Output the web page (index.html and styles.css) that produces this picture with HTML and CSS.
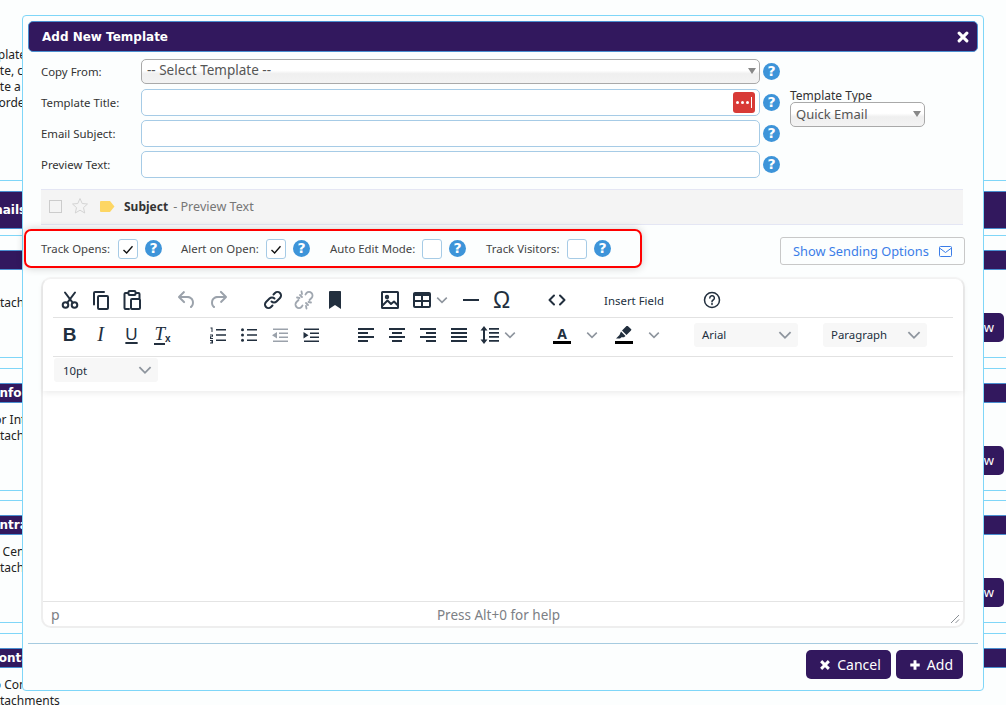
FILE: index.html
```html
<!DOCTYPE html>
<html>
<head>
    <link rel="stylesheet" href="styles.css">
</head>
<body>
    <!-- page behind the dialog -->
    <div class="page">
        <div class="intro">
            <div class="intro-line">Templates let you save a message</div>
            <div class="intro-line">Create, copy or edit one here</div>
            <div class="intro-line">Create a new one for each email</div>
            <div class="intro-line">Use order to sort the list</div>
        </div>
        <div class="banner"><div class="banner-bar"><span class="head-emails">Emails</span></div></div>
        <div class="section">
            <div class="section-bar"></div>
            <div class="section-text"><div>&nbsp;</div><div>Attachments</div></div>
            <a class="view-btn">View</a>
        </div>
        <div class="section">
            <div class="section-bar"><span class="head-info">Info</span></div>
            <div class="section-text"><div>For Internal</div><div>Attachments</div></div>
            <a class="view-btn">View</a>
        </div>
        <div class="section">
            <div class="section-bar"><span class="head-info">Intra</span></div>
            <div class="section-text"><div>In Center</div><div>Attachments</div></div>
            <a class="view-btn">View</a>
        </div>
        <div class="section">
            <div class="section-bar"><span class="head-cont">Contacts</span></div>
            <div class="section-text"><div>To Contacts</div><div>Attachments</div></div>
        </div>
    </div>

    <div class="modal">
        <div class="modal-title">
            <span>Add New Template</span>
            <svg class="close-x" viewBox="0 0 14 14"><path d="M2.5 2.5l9 9M11.5 2.5l-9 9"/></svg>
        </div>

        <div class="form-area">
            <div class="form-rows">
                <div class="form-row row-select">
                    <label>Copy From:</label>
                    <div class="select-wrap"><select class="select-box"><option>-- Select Template --</option></select></div>
                    <span class="help">?</span>
                </div>
                <div class="form-row">
                    <label>Template Title:</label>
                    <div class="input-wrap">
                        <input class="text-input" type="text">
                        <span class="lp-btn"><i></i><i></i><i></i><b></b></span>
                    </div>
                    <span class="help">?</span>
                </div>
                <div class="form-row">
                    <label>Email Subject:</label>
                    <div class="input-wrap"><input class="text-input" type="text"></div>
                    <span class="help">?</span>
                </div>
                <div class="form-row">
                    <label>Preview Text:</label>
                    <div class="input-wrap"><input class="text-input" type="text"></div>
                    <span class="help">?</span>
                </div>
            </div>
            <div class="type-col">
                <div class="type-label">Template Type</div>
                <div class="select-wrap"><select class="select-box"><option>Quick Email</option></select></div>
            </div>
        </div>

        <div class="preview-strip">
            <span class="mini-check"></span>
            <svg class="star" width="18" height="18" viewBox="0 0 18 18"><path d="M9 1.5l2.2 5 5.3.5-4 3.6 1.2 5.4L9 13.2 4.3 16l1.2-5.4-4-3.6 5.3-.5z"/></svg>
            <svg class="tag" width="15" height="11" viewBox="0 0 15 11"><path d="M1 0h9l4.5 5.5L10 11H1a1 1 0 0 1-1-1V1a1 1 0 0 1 1-1z"/></svg>
            <span class="strip-subject">Subject</span>
            <span class="strip-preview">- Preview Text</span>
        </div>

        <div class="options-row">
            <div class="track-box">
                <span class="track-label">Track Opens:</span>
                <span class="check-box"><svg viewBox="0 0 20 20"><path d="M5 11l3.5 3.5L15 7"/></svg></span>
                <span class="help">?</span>
                <span class="track-label alert-label">Alert on Open:</span>
                <span class="check-box"><svg viewBox="0 0 20 20"><path d="M5 11l3.5 3.5L15 7"/></svg></span>
                <span class="help">?</span>
                <span class="track-label auto-label">Auto Edit Mode:</span>
                <span class="check-box"></span>
                <span class="help">?</span>
                <span class="track-label visit-label">Track Visitors:</span>
                <span class="check-box"></span>
                <span class="help">?</span>
            </div>
            <a class="sending-btn">Show Sending Options
                <svg width="13" height="11" viewBox="0 0 13 11"><rect x=".5" y=".5" width="12" height="10" rx="1"/><path d="M.5 2l6 4.5 6-4.5"/></svg>
            </a>
        </div>

        <div class="editor">
            <div class="editor-head">
                <div class="tb-row tb-row-one">
                    <div class="tb-group">
                        <span class="tb"><svg viewBox="0 0 24 24" class="ic"><circle cx="7.5" cy="17" r="2.8"/><circle cx="16.5" cy="17" r="2.8"/><path d="M9.2 14.8L17 4.5M14.8 14.8L7 4.5"/></svg></span>
                        <span class="tb"><svg viewBox="0 0 24 24" class="ic"><path d="M5 16.5V5a1 1 0 0 1 1-1h9"/><rect x="9" y="8" width="10" height="13" rx="1"/></svg></span>
                        <span class="tb"><svg viewBox="0 0 24 24" class="ic"><path d="M8 5H5.5a1 1 0 0 0-1 1v14a1 1 0 0 0 1 1H9M16 5h2.5a1 1 0 0 1 1 1v4"/><rect x="8.5" y="3" width="7" height="4" rx="1"/><rect x="11" y="11" width="9" height="10" rx="1"/></svg></span>
                    </div>
                    <div class="tb-group">
                        <span class="tb"><svg viewBox="0 0 24 24" class="ic-fill off"><path d="M6.4 8H12c3.7 0 6.2 2 6.8 5.1.6 2.7-.4 5.6-2.3 6.8a1 1 0 0 1-1-1.8c1.1-.7 1.8-2.7 1.4-4.6-.5-2.1-2.1-3.5-4.9-3.5H6.4l3.3 3.3a1 1 0 1 1-1.4 1.4l-5-5a1 1 0 0 1 0-1.4l5-5a1 1 0 0 1 1.4 1.4L6.4 8z"/></svg></span>
                        <span class="tb"><svg viewBox="0 0 24 24" class="ic-fill off"><path d="M17.6 10H12c-2.8 0-4.4 1.4-4.9 3.5-.4 2 .3 4 1.4 4.6a1 1 0 1 1-1 1.8c-2-1.2-2.9-4.1-2.3-6.8.6-3 3-5.1 6.8-5.1h5.6l-3.3-3.3a1 1 0 1 1 1.4-1.4l5 5a1 1 0 0 1 0 1.4l-5 5a1 1 0 0 1-1.4-1.4l3.3-3.3z"/></svg></span>
                    </div>
                    <div class="tb-group">
                        <span class="tb"><svg viewBox="0 0 24 24" class="ic"><path d="M10.5 13.5a3.5 3.5 0 0 0 5 0l3.5-3.5a3.5 3.5 0 0 0-5-5l-1.5 1.5"/><path d="M13.5 10.5a3.5 3.5 0 0 0-5 0L5 14a3.5 3.5 0 0 0 5 5l1.5-1.5"/></svg></span>
                        <span class="tb"><svg viewBox="0 0 24 24" class="ic off"><path d="M13.5 6.5L14.5 5a3.5 3.5 0 0 1 5 5L17.5 12"/><path d="M10.5 17.5L9.5 19a3.5 3.5 0 0 1-5-5L6.5 12"/><path d="M10 9L8 7M7.5 10L5 9.5M10 6L9.5 3.5M14 15l2 2M16.5 14l2.5.5M14 18l.5 2.5"/></svg></span>
                        <span class="tb"><svg viewBox="0 0 24 24" class="ic-fill"><path d="M6 4v17l6-4 6 4V4c0-.6-.4-1-1-1H7a1 1 0 0 0-1 1z"/></svg></span>
                    </div>
                    <div class="tb-group">
                        <span class="tb"><svg viewBox="0 0 24 24" class="ic"><rect x="4" y="4" width="16" height="16" rx=".5"/><path d="M4.5 17.5l5-5 3.5 3.5 3-2.5 4 4"/><circle cx="9" cy="9" r="1.2"/></svg></span>
                        <span class="tb tb-split"><svg viewBox="0 0 24 24" class="ic-fill"><path d="M19 4a2 2 0 0 1 2 2v12a2 2 0 0 1-2 2H5a2 2 0 0 1-2-2V6c0-1.1.9-2 2-2h14zM5 14v4h6v-4H5zm14 0h-6v4h6v-4zm0-6h-6v4h6V8zM5 12h6V8H5v4z"/></svg><svg viewBox="0 0 10 10" class="chev"><path d="M1 3l4 4 4-4"/></svg></span>
                        <span class="tb"><svg viewBox="0 0 24 24" class="ic-fill"><path d="M4 11h16v2H4z"/></svg></span>
                        <span class="tb tb-text omega">Ω</span>
                    </div>
                    <div class="tb-group">
                        <span class="tb"><svg viewBox="0 0 24 24" class="ic"><path d="M9 7.5L4.5 12 9 16.5M15 7.5l4.5 4.5-4.5 4.5"/></svg></span>
                    </div>
                    <div class="tb-group">
                        <span class="tb-field">Insert Field</span>
                    </div>
                    <div class="tb-group">
                        <span class="tb"><svg viewBox="0 0 24 24" class="ic thin"><circle cx="12" cy="12" r="7.5"/><path d="M9.8 10a2.3 2.3 0 1 1 3.4 2c-.8.5-1.2 1-1.2 1.8"/><path d="M12 15.5v1"/></svg></span>
                    </div>
                </div>

                <div class="tb-row tb-row-two">
                    <div class="tb-group">
                        <span class="tb tb-text fmt-b">B</span>
                        <span class="tb tb-text fmt-i">I</span>
                        <span class="tb tb-text fmt-u">U</span>
                        <span class="tb tb-text fmt-t"><span class="t-mark">T</span><span class="t-x">x</span></span>
                    </div>
                    <div class="tb-group">
                        <span class="tb"><svg viewBox="0 0 24 24" class="ic-fill"><path d="M10 6h10v1.6H10zM10 11.2h10v1.6H10zM10 16.4h10v1.6H10zM4.500 4.500h2V9h-1V5.500h-1zM4 11.500h3v2.300H5.200V15H7v1H4v-2.700h2v-.8H4zM4 17h3v3.500H4v-1h2V19.200H5v-.8h1v-.4H4z"/></svg></span>
                        <span class="tb"><svg viewBox="0 0 24 24" class="ic-fill"><path d="M10 6h10v1.6H10zM10 11.2h10v1.6H10zM10 16.4h10v1.6H10z"/><circle cx="5.5" cy="6.8" r="1.5"/><circle cx="5.5" cy="12" r="1.5"/><circle cx="5.5" cy="17.2" r="1.5"/></svg></span>
                        <span class="tb"><svg viewBox="0 0 24 24" class="ic-fill off"><path d="M5 5.5h15v1.6H5zM11 9.5h9v1.6h-9zM11 13.5h9v1.6h-9zM5 17.5h15v1.6H5zM9 9v6.500L4 12.300z"/></svg></span>
                        <span class="tb"><svg viewBox="0 0 24 24" class="ic-fill"><path d="M5 5.5h15v1.6H5zM11 9.5h9v1.6h-9zM11 13.5h9v1.6h-9zM5 17.5h15v1.6H5zM4.500 9v6.500l5-3.200z"/></svg></span>
                    </div>
                    <div class="tb-group">
                        <span class="tb"><svg viewBox="0 0 24 24" class="ic-fill"><path d="M4 5h16v2H4zM4 9h10v2H4zM4 13h16v2H4zM4 17h10v2H4z"/></svg></span>
                        <span class="tb"><svg viewBox="0 0 24 24" class="ic-fill"><path d="M4 5h16v2H4zM7 9h10v2H7zM4 13h16v2H4zM7 17h10v2H7z"/></svg></span>
                        <span class="tb"><svg viewBox="0 0 24 24" class="ic-fill"><path d="M4 5h16v2H4zM10 9h10v2H10zM4 13h16v2H4zM10 17h10v2H10z"/></svg></span>
                        <span class="tb"><svg viewBox="0 0 24 24" class="ic-fill"><path d="M4 5h16v2H4zM4 9h16v2H4zM4 13h16v2H4zM4 17h16v2H4z"/></svg></span>
                        <span class="tb tb-split tb-line"><svg viewBox="0 0 24 24" class="ic-fill"><path d="M11 5h10v1.8H11zM11 9h10v1.8H11zM11 13h10v1.8H11zM11 17h10v1.8H11zM6 3l3.500 4.500H7V16.500h2.500L6 21l-3.500-4.500H5V7.500H2.500z"/></svg><svg viewBox="0 0 10 10" class="chev"><path d="M1 3l4 4 4-4"/></svg></span>
                    </div>
                    <div class="tb-group tb-colors">
                        <span class="tb-color"><span class="color-a">A<b></b></span><svg viewBox="0 0 10 10" class="chev"><path d="M1 3l4 4 4-4"/></svg></span>
                        <span class="tb-color"><span class="color-pen"><svg viewBox="0 0 18 14" width="18" height="14"><path d="M7 4.5L11.5 0a1 1 0 0 1 1.3 0l3.2 3a1 1 0 0 1 0 1.4L11.5 9zM6 5.5l4.5 4.5-1.5 1.2H6.5L5 12.5H1L4.5 9z"/></svg><b></b></span><svg viewBox="0 0 10 10" class="chev"><path d="M1 3l4 4 4-4"/></svg></span>
                    </div>
                    <span class="tb-select first-select">Arial<svg viewBox="0 0 10 10" class="chev"><path d="M1 3l4 4 4-4"/></svg></span>
                    <span class="tb-select second-select">Paragraph<svg viewBox="0 0 10 10" class="chev"><path d="M1 3l4 4 4-4"/></svg></span>
                </div>

                <div class="tb-row tb-row-three">
                    <span class="tb-select">10pt<svg viewBox="0 0 10 10" class="chev"><path d="M1 3l4 4 4-4"/></svg></span>
                </div>
            </div>
            <div class="editor-area"></div>
            <div class="editor-status">
                <span class="status-path">p</span>
                <span class="status-help">Press Alt+0 for help</span>
                <svg class="resize" width="10" height="10" viewBox="0 0 10 10"><path d="M1 9l8-8M5.5 9L9 5.5"/></svg>
            </div>
        </div>

        <div class="modal-footer">
            <a class="btn"><svg viewBox="0 0 14 14" width="12" height="12" class="btn-x"><path d="M2.5 2.5l9 9M11.5 2.5l-9 9"/></svg>Cancel</a>
            <a class="btn"><svg viewBox="0 0 14 14" width="12" height="12" class="btn-x"><path d="M7 1.5v11M1.5 7h11"/></svg>Add</a>
        </div>
    </div>
</body>
</html>
```

FILE: styles.css
```css
html {
    overflow: hidden;
}

body {
    margin: 0;
    height: 705px;
    overflow: hidden;
    background-color: #fcfefe;
    font-family: "Noto Sans", Arial, sans-serif;
    font-size: 11.4px;
    color: #333;
    position: relative;
}

/* page behind the dialog */
.page {
    height: 658px;
    overflow: hidden;
    padding-top: 47px;
}

.intro {
    height: 133px;
    font-size: 12px;
    line-height: 16px;
    color: #222;
    margin-left: -26px;
    white-space: nowrap;
}

.banner {
    border-top: 1px solid #7fd6f8;
    padding-top: 10px;
    margin-bottom: 6px;
}

.banner-bar {
    height: 36px;
    line-height: 36px;
    background-color: #32185e;
    border-top: 1px solid #4a8fd0;
    border-bottom: 1px solid #4a8fd0;
    color: white;
    font-family: "DejaVu Sans", sans-serif;
    font-weight: bold;
    font-size: 12px;
}

.head-emails {
    margin-left: -18px;
}

.section {
    height: 107px;
    border-top: 1px solid #7fd6f8;
    border-bottom: 1px solid #7fd6f8;
    margin-bottom: 9.6px;
    padding-top: 14px;
}

.section-bar {
    height: 18px;
    line-height: 18px;
    background-color: #32185e;
    border-top: 1px solid #4a8fd0;
    border-bottom: 1px solid #4a8fd0;
    color: white;
    font-family: "DejaVu Sans", sans-serif;
    font-weight: bold;
    font-size: 12px;
}

.head-info {
    margin-left: -5px;
}

.head-cont {
    margin-left: -10px;
}

.section-text {
    margin: 9px 0 0 -12px;
    font-size: 12px;
    line-height: 16px;
    color: #222;
    white-space: nowrap;
}

.view-btn {
    display: block;
    width: 60px;
    height: 29px;
    line-height: 29px;
    margin: 2px 2px 0 auto;
    padding-right: 10px;
    box-sizing: border-box;
    text-align: right;
    background-color: #32185e;
    color: white;
    border-radius: 5px;
    font-size: 13px;
}

/* dialog */
.modal {
    position: absolute;
    left: 22px;
    top: 15px;
    width: 962px;
    height: 676px;
    box-sizing: border-box;
    background-color: #fcfefe;
    border: 1px solid #7fd6f8;
    border-radius: 4px;
    padding: 5px;
}

.modal-title {
    display: flex;
    justify-content: space-between;
    align-items: center;
    height: 31px;
    box-sizing: border-box;
    padding: 0 8px 0 13px;
    background-color: #32185e;
    border: 1px solid #4a8fd0;
    border-radius: 5px;
    color: white;
    font-family: "DejaVu Sans", sans-serif;
    font-weight: bold;
    font-size: 12px;
}

.close-x {
    width: 12px;
    height: 12px;
    fill: none;
    stroke: white;
    stroke-width: 3.6;
    stroke-linecap: round;
}

.form-area {
    display: flex;
    padding: 7px 0 0 13px;
}

.form-rows {
    display: flex;
    flex-direction: column;
    gap: 4px;
    width: 749px;
}

.form-row {
    display: flex;
    align-items: center;
    height: 27px;
}

.form-row label {
    width: 100px;
    flex-shrink: 0;
}

.row-select {
    height: 25px;
    margin-bottom: 1px;
}

.select-wrap {
    position: relative;
    height: 100%;
}

.form-row .select-wrap,
.input-wrap {
    width: 619px;
    height: 100%;
    position: relative;
}

.select-box {
    appearance: none;
    width: 100%;
    height: 100%;
    box-sizing: border-box;
    padding: 0 0 3px 5px;
    border: 1px solid #a9a9a9;
    border-radius: 5px;
    background: linear-gradient(#fff 45%, #efefef 60%, #f3f3f3);
    font-family: "Noto Sans", Arial, sans-serif;
    font-size: 13.5px;
    color: #555;
}

.select-wrap::after {
    content: "";
    position: absolute;
    right: 4px;
    top: 9px;
    border-left: 4px solid transparent;
    border-right: 4px solid transparent;
    border-top: 6px solid #888;
}

.text-input {
    width: 100%;
    height: 100%;
    box-sizing: border-box;
    border: 1px solid #a6cbe6;
    border-radius: 5px;
    background-color: white;
}

.lp-btn {
    position: absolute;
    right: 5px;
    top: 3px;
    width: 22px;
    height: 21px;
    background-color: #d83a36;
    border-radius: 3px;
    display: flex;
    align-items: center;
    justify-content: center;
    gap: 2px;
}

.lp-btn i {
    width: 3px;
    height: 3px;
    border-radius: 50%;
    background-color: white;
}

.lp-btn b {
    width: 1px;
    height: 11px;
    background-color: white;
}

.help {
    display: inline-block;
    flex-shrink: 0;
    width: 17px;
    height: 17px;
    line-height: 17px;
    margin-left: 3px;
    border-radius: 50%;
    background-color: #3d94d9;
    color: white;
    text-align: center;
    font-family: "DejaVu Sans", sans-serif;
    font-weight: bold;
    font-size: 14px;
}

.type-col {
    margin-top: 30px;
    width: 135px;
}

.type-label {
    line-height: 13px;
    font-size: 12px;
    color: #333;
    white-space: nowrap;
}

.type-col .select-wrap {
    height: 25px;
}

.type-col .select-box {
    font-size: 13px;
    padding-bottom: 2px;
}

.preview-strip {
    display: flex;
    align-items: center;
    height: 36px;
    box-sizing: border-box;
    margin: 11px 15px 0 13px;
    padding: 0 0 2px 8px;
    background-color: #f4f4f4;
    border-top: 1px solid #e4e6f4;
    border-bottom: 1px solid #e4e6f4;
}

.mini-check {
    width: 13px;
    height: 13px;
    border: 1px solid #ccc;
    box-sizing: border-box;
}

.star {
    margin-left: 9px;
    fill: none;
    stroke: #d4d4d4;
    stroke-width: 1;
}

.tag {
    margin-left: 11px;
    fill: #fdd663;
}

.strip-subject {
    margin-left: 9px;
    font-size: 12px;
    font-weight: bold;
    color: #333;
}

.strip-preview {
    margin-left: 5px;
    font-size: 12.6px;
    color: #777;
}

.options-row {
    display: flex;
    justify-content: space-between;
    height: 39px;
    margin: 4px 13px 0 -4px;
}

.track-box {
    display: flex;
    align-items: center;
    width: 618px;
    height: 39px;
    box-sizing: border-box;
    padding-left: 15px;
    border: 2px solid #f00;
    border-radius: 7px;
    box-shadow: 0 0 8px rgba(0, 0, 0, 0.2);
    white-space: nowrap;
}

.track-label {
    width: 77px;
    color: #444;
}

.alert-label {
    width: 85px;
    margin-left: 19px;
}

.auto-label {
    width: 92px;
    margin-left: 20px;
}

.visit-label {
    width: 81px;
    margin-left: 20px;
}

.check-box {
    width: 20px;
    height: 20px;
    box-sizing: border-box;
    border: 1px solid #a6cbe6;
    border-radius: 3px;
    background-color: white;
}

.check-box svg {
    display: block;
    width: 18px;
    height: 18px;
    fill: none;
    stroke: #111;
    stroke-width: 1.5;
}

.check-box + .help {
    margin-left: 7px;
}

.sending-btn {
    display: flex;
    align-items: center;
    justify-content: space-between;
    align-self: flex-start;
    width: 185px;
    height: 28px;
    box-sizing: border-box;
    margin-top: 8px;
    padding: 0 12px;
    border: 1px solid #c8c8c8;
    border-radius: 3px;
    color: #3b7de8;
    font-size: 12.8px;
    white-space: nowrap;
}

.sending-btn svg {
    fill: none;
    stroke: #3b7de8;
}

/* editor */
.editor {
    display: flex;
    flex-direction: column;
    height: 351px;
    box-sizing: border-box;
    margin: 9px 13px 0 13px;
    border: 2px solid #eeeeee;
    border-top-color: #f6f6f6;
    border-radius: 10px;
    background-color: white;
}

.editor-head {
    padding: 5px 10px 0 10px;
    height: 112px;
    box-sizing: border-box;
    box-shadow: 0 2px 6px rgba(0, 0, 0, 0.08);
    border-radius: 8px 8px 0 0;
}

.tb-row {
    display: flex;
    align-items: center;
    gap: 24px;
    border-bottom: 1px solid #e2e2e2;
}

.tb-row-one {
    height: 32px;
    padding: 0 0 1px 1px;
}

.tb-row-two {
    height: 33px;
    padding: 0 0 5px 1px;
}

.tb-row-three {
    height: 32px;
    padding: 1px 0 0 1px;
    align-items: flex-start;
    border-bottom: none;
}

.tb-row-three .tb-select {
    padding-left: 9px;
}

.tb-group {
    display: flex;
    align-items: center;
    color: #222f3e;
}

.tb {
    display: flex;
    align-items: center;
    justify-content: center;
    width: 31px;
    height: 24px;
}

.tb svg.ic,
.tb svg.ic-fill {
    width: 24px;
    height: 24px;
    flex-shrink: 0;
}

.ic {
    fill: none;
    stroke: #222f3e;
    stroke-width: 2;
    stroke-linecap: round;
    stroke-linejoin: round;
}

.ic.thin {
    stroke-width: 1.5;
}

.ic.off {
    stroke: #a0a7b0;
    stroke-width: 1.8;
}

.ic-fill {
    fill: #222f3e;
}

.ic-fill.off {
    fill: #9ba2ab;
}

.tb-split {
    width: 50px;
    justify-content: flex-start;
    padding-left: 5px;
    box-sizing: border-box;
}

.tb-line {
    padding-left: 4px;
}

.chev {
    width: 12px;
    height: 12px;
    margin-left: 2px;
    flex-shrink: 0;
    fill: none;
    stroke: #8e959e;
    stroke-width: 1.3;
}

.tb-text {
    font-family: "Liberation Sans", Arial, sans-serif;
    color: #222f3e;
}

.omega {
    font-size: 23px;
}

.fmt-b {
    font-size: 19px;
    font-weight: bold;
}

.fmt-i {
    font-family: "Liberation Serif", serif;
    font-size: 20px;
    font-style: italic;
}

.fmt-u {
    font-size: 17px;
    text-decoration: underline;
    text-decoration-thickness: 2px;
    text-underline-offset: 2px;
}

.t-mark {
    font-family: "Liberation Serif", serif;
    font-style: italic;
    font-size: 19px;
    border-bottom: 2px solid #222f3e;
    line-height: 19px;
}

.t-x {
    font-size: 10px;
    font-weight: bold;
    margin-top: 8px;
}

.tb-field {
    display: block;
    width: 76px;
    text-align: center;
    color: #222f3e;
}

.tb-color {
    display: flex;
    align-items: center;
    width: 62px;
    padding-left: 2px;
    box-sizing: border-box;
}

.tb-color .chev {
    margin-left: 15px;
}

.color-a,
.color-pen {
    display: flex;
    flex-direction: column;
    align-items: center;
    width: 18px;
    font-weight: bold;
    font-size: 14px;
    line-height: 15px;
    margin-left: 3px;
}

.color-a b,
.color-pen b {
    display: block;
    width: 18px;
    height: 3px;
    background-color: #000;
}

.color-pen svg {
    fill: #222f3e;
    margin-bottom: 1px;
}

.tb-select {
    display: flex;
    align-items: center;
    justify-content: space-between;
    width: 104px;
    height: 24px;
    box-sizing: border-box;
    padding: 0 6px 0 8px;
    background-color: #f7f7f7;
    border-radius: 3px;
    color: #222f3e;
}

.tb-select .chev {
    width: 14px;
    height: 14px;
}

.first-select {
    margin-left: -2px;
}

.second-select {
    margin-left: 1px;
}

.editor-area {
    flex: 1;
}

.editor-status {
    position: relative;
    display: flex;
    align-items: center;
    justify-content: center;
    height: 23px;
    padding-top: 1px;
    flex-shrink: 0;
    border-top: 1px solid #e4e4e4;
    color: #7c8085;
    font-size: 13.5px;
}

.status-help {
    margin-right: 9px;
}

.status-path {
    position: absolute;
    left: 8px;
    font-size: 14px;
}

.resize {
    position: absolute;
    right: 3px;
    bottom: 2px;
    fill: none;
    stroke: #8a8f95;
}

.modal-footer {
    display: flex;
    justify-content: flex-end;
    gap: 5px;
    margin-top: 15px;
    padding: 6px 15px 0 0;
    border-top: 1px solid #a6cbe0;
}

.btn {
    display: flex;
    align-items: center;
    height: 29px;
    padding: 0 10px 0 13px;
    background-color: #32185e;
    color: white;
    border-radius: 5px;
    font-size: 14px;
}

.btn-x {
    margin-right: 6px;
    fill: none;
    stroke: white;
    stroke-width: 3.4;
}
```
